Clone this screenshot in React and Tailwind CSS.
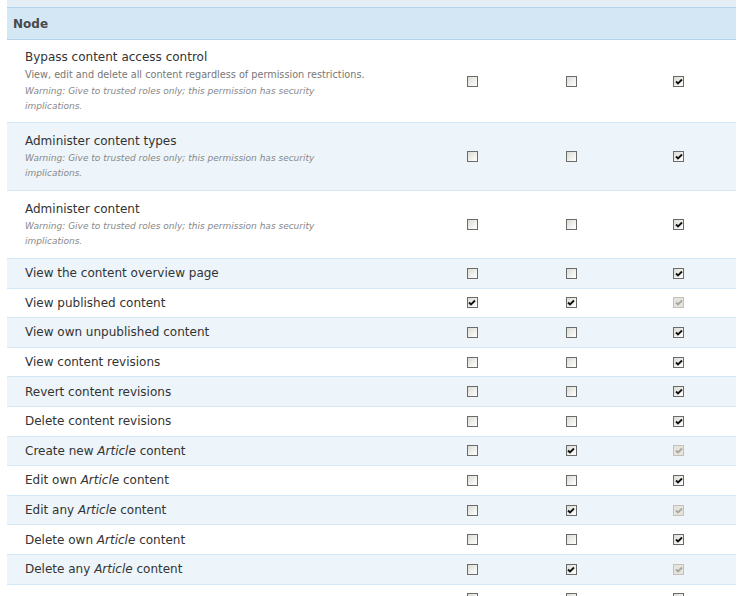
import React from "react";

const Box = ({ s }) => {
  // s: 0 unchecked, 1 checked, 2 disabled checked
  const dis = s === 2;
  return (
    <span
      className={`inline-flex items-center justify-center w-[11px] h-[11px] border ${
        dis ? "border-[#c4c2b8] bg-[#e6e4dc]" : "border-[#6b6b6b] bg-gradient-to-br from-[#dcdcd5] to-white"
      }`}
    >
      {s > 0 && (
        <svg width="8" height="7" viewBox="0 0 8 7">
          <path d="M1 3.5 L3 5.5 L7 1.5" fill="none" stroke={dis ? "#a8a8a0" : "#111"} strokeWidth="1.8" />
        </svg>
      )}
    </span>
  );
};

const warn = "Warning: Give to trusted roles only; this permission has security implications.";

const rows = [
  { t: "Bypass content access control", d: "View, edit and delete all content regardless of permission restrictions.", w: true, c: [0, 0, 1] },
  { t: "Administer content types", w: true, c: [0, 0, 1] },
  { t: "Administer content", w: true, c: [0, 0, 1] },
  { t: "View the content overview page", c: [0, 0, 1] },
  { t: "View published content", c: [1, 1, 2] },
  { t: "View own unpublished content", c: [0, 0, 1] },
  { t: "View content revisions", c: [0, 0, 1] },
  { t: "Revert content revisions", c: [0, 0, 1] },
  { t: "Delete content revisions", c: [0, 0, 1] },
  { t: ["Create new ", "Article", " content"], c: [0, 1, 2] },
  { t: ["Edit own ", "Article", " content"], c: [0, 0, 1] },
  { t: ["Edit any ", "Article", " content"], c: [0, 1, 2] },
  { t: ["Delete own ", "Article", " content"], c: [0, 0, 1] },
  { t: ["Delete any ", "Article", " content"], c: [0, 1, 2] },
  { t: "", c: [0, 0, 1] },
];

export default function App() {
  return (
    <div className="w-[744px] h-[596px] overflow-hidden bg-white text-[#333] font-[family-name:DejaVu_Sans,Verdana,sans-serif]">
      <div className="h-[8px] bg-[#e3eef7] border-b border-[#b4d3ea] ml-[7px] mr-[8px]" />
      <div className="ml-[7px] mr-[8px]">
        <div className="h-[32px] bg-[#d3e7f4] border-b border-[#b4d3ea] flex items-center pl-[6px] text-[12px] font-bold text-[#494949]">
          Node
        </div>
        {rows.map((r, i) => (
          <div
            key={i}
            className={`flex items-center border-b border-[#d3e7f4] ${i % 2 ? "bg-[#edf5fa]" : "bg-white"} ${
              r.w ? (r.d ? "h-[83px]" : "h-[68px]") : "h-[29.6px]"
            }`}
          >
            <div className="w-[420px] pl-[18px]">
              <div className="text-[12px] leading-[18px] text-[#333]">
                {Array.isArray(r.t) ? (
                  <>
                    {r.t[0]}
                    <em>{r.t[1]}</em>
                    {r.t[2]}
                  </>
                ) : (
                  r.t
                )}
              </div>
              {r.d && <div className="text-[9.7px] leading-[16px] text-[#777] mt-[1px] whitespace-nowrap">{r.d}</div>}
              {r.w && <div className="text-[9px] leading-[15px] italic text-[#888] pr-[50px] mt-[1px]">{warn}</div>}
            </div>
            <div className="w-[100px] flex justify-center -ml-[1px]"><Box s={r.c[0]} /></div>
            <div className="w-[100px] flex justify-center"><Box s={r.c[1]} /></div>
            <div className="w-[116px] flex justify-center"><Box s={r.c[2]} /></div>
          </div>
        ))}
      </div>
    </div>
  );
}
